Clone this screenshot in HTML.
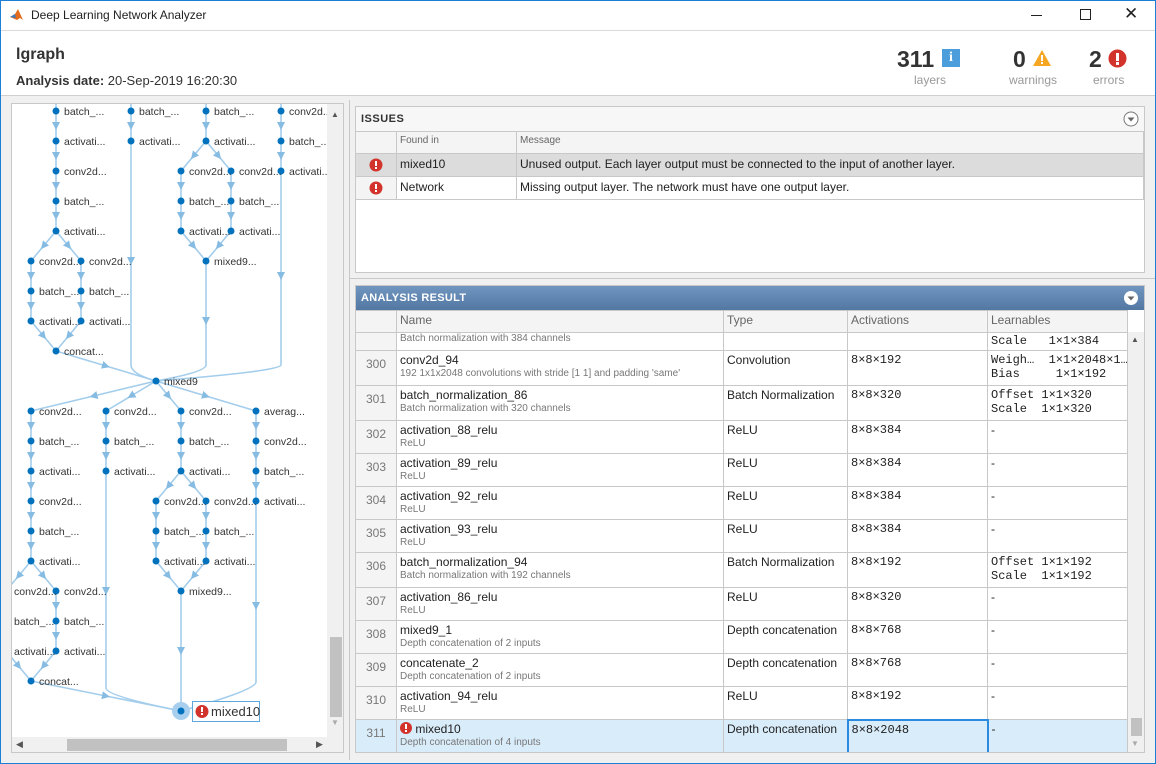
<!DOCTYPE html>
<html><head><meta charset="utf-8"><style>
*{box-sizing:border-box;margin:0;padding:0}
html,body{width:1156px;height:764px;overflow:hidden}
body{background:#f0f0f0;font-family:"Liberation Sans",Arial,sans-serif;position:relative;color:#222}
.abs{position:absolute}
.frame{position:absolute;left:0;top:0;width:1156px;height:764px;border:1px solid #1c7fd6;pointer-events:none}
.tb{left:0;top:0;width:1156px;height:30px;background:#fff}
.hdr{left:0;top:30px;width:1156px;height:66px;background:#fff;border-top:1px solid #dadada;border-bottom:1px solid #cfcfcf}
table{border-collapse:collapse;table-layout:fixed}
td{border:1px solid #c8c8c8;vertical-align:top;overflow:hidden;white-space:nowrap}
.hd td{background:#f4f4f4;color:#666;font-size:10px;padding:3px 3px 0;height:22px}
.sub{font-size:10px;color:#777;display:block;margin-top:1px}
.num{background:#f4f4f4;color:#777;font-size:10px;text-align:center;padding-top:6px!important}
.mono{font-family:"Liberation Mono",monospace;font-size:11px}
.rt td{font-size:12px;padding:2px 3px}
</style></head><body>
<div class="abs tb">
 <svg class="abs" style="left:9px;top:7px" width="16" height="16" viewBox="0 0 16 16"><path d="M1 10 L6 7 L9 2 L14 13 L11 11 L8 13 Z" fill="#e36a1c"/><path d="M1 10 L6 7 L7 11 Z" fill="#3a7bbf"/></svg>
 <div class="abs" style="left:31px;top:8px;font-size:12px">Deep Learning Network Analyzer</div>
 <div class="abs" style="left:1031px;top:15px;width:11px;height:1px;background:#222"></div>
 <div class="abs" style="left:1080px;top:9px;width:11px;height:11px;border:1px solid #222"></div>
 <div class="abs" style="left:1124px;top:4px;font-size:17px;color:#222">✕</div>
</div>
<div class="abs hdr">
 <div class="abs" style="left:16px;top:15px;font-size:16px;font-weight:bold;color:#333">lgraph</div>
 <div class="abs" style="left:16px;top:42px;font-size:13px;color:#333"><b>Analysis date:</b> 20-Sep-2019 16:20:30</div>
 <div class="abs" style="left:897px;top:15px;font-size:23px;font-weight:bold;color:#333">311</div>
 <div class="abs" style="left:942px;top:18px;width:18px;height:18px;background:#4b9edb;color:#fff;font:bold 14px 'Liberation Serif',serif;text-align:center;line-height:18px">i</div>
 <div class="abs" style="left:914px;top:42px;font-size:12px;color:#999">layers</div>
 <div class="abs" style="left:1013px;top:15px;font-size:23px;font-weight:bold;color:#333">0</div>
 <svg class="abs" style="left:1032px;top:18px" width="20" height="18"><path d="M10 1 L19 17 L1 17 Z" fill="#f5a623"/><rect x="9" y="6" width="2" height="6" fill="#fff"/><rect x="9" y="13" width="2" height="2" fill="#fff"/></svg>
 <div class="abs" style="left:1009px;top:42px;font-size:12px;color:#999">warnings</div>
 <div class="abs" style="left:1089px;top:15px;font-size:23px;font-weight:bold;color:#333">2</div>
 <svg class="abs" style="left:1108px;top:18px" width="19" height="19"><circle cx="9.5" cy="9.5" r="9" fill="#d2332a"/><rect x="8" y="4" width="3" height="8" fill="#fff"/><rect x="8" y="13" width="3" height="3" fill="#fff"/></svg>
 <div class="abs" style="left:1093px;top:42px;font-size:12px;color:#999">errors</div>
</div>
<div class="abs" style="left:349px;top:100px;width:1px;height:660px;background:#c8c8c8"></div>
<div class="abs" style="left:349px;top:278px;width:807px;height:1px;background:#c8c8c8"></div>

<!-- graph panel -->
<div class="abs" style="left:11px;top:103px;width:333px;height:650px;border:1px solid #c8c8c8;background:#fff;overflow:hidden">
<svg class="abs" style="left:-12px;top:-104px" width="340" height="750" font-family="Liberation Sans, Arial, sans-serif" font-size="10.5" fill="#333">
<defs><marker id="ar" markerWidth="8" markerHeight="8" refX="4" refY="4" orient="auto" markerUnits="userSpaceOnUse"><path d="M0 0 L8 4 L0 8 Z" fill="#86bbe2"/></marker></defs>
<g fill="none" stroke="#a3cdec" stroke-width="1.6" marker-mid="url(#ar)">
<polyline points="56,111 56,126 56,141"/><polyline points="56,141 56,156 56,171"/><polyline points="56,171 56,186 56,201"/><polyline points="56,201 56,216 56,231"/>
<polyline points="56,231 43.5,246 31,261"/><polyline points="56,231 68.5,246 81,261"/>
<polyline points="31,261 31,276 31,291"/><polyline points="31,291 31,306 31,321"/><polyline points="81,261 81,276 81,291"/><polyline points="81,291 81,306 81,321"/>
<polyline points="31,321 43.5,336 56,351"/><polyline points="81,321 68.5,336 56,351"/>
<polyline points="56,351 106,366 156,381"/>
<polyline points="131,111 131,126 131,141"/><polyline points="131,141 131,261 131,365"/>
<polyline points="206,111 206,126 206,141"/><polyline points="206,141 193.5,156 181,171"/><polyline points="206,141 218.5,156 231,171"/>
<polyline points="181,171 181,186 181,201"/><polyline points="181,201 181,216 181,231"/><polyline points="231,171 231,186 231,201"/><polyline points="231,201 231,216 231,231"/>
<polyline points="181,231 193.5,246 206,261"/><polyline points="231,231 218.5,246 206,261"/>
<polyline points="206,261 206,321 206,365"/>
<polyline points="281,111 281,126 281,141"/><polyline points="281,141 281,156 281,171"/><polyline points="281,171 281,276 281,365"/>
<polyline points="156,381 93.5,396 31,411"/><polyline points="156,381 131,396 106,411"/><polyline points="156,381 168.5,396 181,411"/><polyline points="156,381 206,396 256,411"/>
<polyline points="31,411 31,426 31,441"/><polyline points="31,441 31,456 31,471"/><polyline points="31,471 31,486 31,501"/><polyline points="31,501 31,516 31,531"/><polyline points="31,531 31,546 31,561"/>
<polyline points="31,561 18.5,576 6,591"/><polyline points="31,561 43.5,576 56,591"/>
<polyline points="56,591 56,606 56,621"/><polyline points="56,621 56,636 56,651"/><polyline points="6,591 6,606 6,621"/><polyline points="6,621 6,636 6,651"/>
<polyline points="56,651 43.5,666 31,681"/><polyline points="6,651 18.5,666 31,681"/>
<polyline points="31,681 106,696 181,711"/>
<polyline points="106,411 106,426 106,441"/><polyline points="106,441 106,456 106,471"/><polyline points="106,471 106,591 106,688"/>
<polyline points="181,411 181,426 181,441"/><polyline points="181,441 181,456 181,471"/>
<polyline points="181,471 168.5,486 156,501"/><polyline points="181,471 193.5,486 206,501"/>
<polyline points="156,501 156,516 156,531"/><polyline points="156,531 156,546 156,561"/><polyline points="206,501 206,516 206,531"/><polyline points="206,531 206,546 206,561"/>
<polyline points="156,561 168.5,576 181,591"/><polyline points="206,561 193.5,576 181,591"/>
<polyline points="181,591 181,651 181,711"/>
<polyline points="256,411 256,426 256,441"/><polyline points="256,441 256,456 256,471"/><polyline points="256,471 256,486 256,501"/><polyline points="256,501 256,606 256,682"/>
</g>
<g fill="none" stroke="#a3cdec" stroke-width="1.6">
<path d="M56 100 V111 M131 100 V111 M206 100 V111 M281 100 V111"/>
<path d="M131 365 Q131 374 156 381"/><path d="M206 365 Q206 372 156 381"/><path d="M281 365 Q281 371 156 381"/>
<path d="M106 688 Q106 696 181 711"/><path d="M256 682 Q256 690 181 711"/>
</g>
<circle cx="181" cy="711" r="9" fill="#a8d0ee"/>
<g fill="#0072bd">
<circle cx="56" cy="111" r="3.5"/><circle cx="56" cy="141" r="3.5"/><circle cx="56" cy="171" r="3.5"/><circle cx="56" cy="201" r="3.5"/><circle cx="56" cy="231" r="3.5"/>
<circle cx="31" cy="261" r="3.5"/><circle cx="81" cy="261" r="3.5"/><circle cx="31" cy="291" r="3.5"/><circle cx="81" cy="291" r="3.5"/><circle cx="31" cy="321" r="3.5"/><circle cx="81" cy="321" r="3.5"/><circle cx="56" cy="351" r="3.5"/>
<circle cx="131" cy="111" r="3.5"/><circle cx="131" cy="141" r="3.5"/>
<circle cx="206" cy="111" r="3.5"/><circle cx="206" cy="141" r="3.5"/><circle cx="181" cy="171" r="3.5"/><circle cx="231" cy="171" r="3.5"/><circle cx="181" cy="201" r="3.5"/><circle cx="231" cy="201" r="3.5"/><circle cx="181" cy="231" r="3.5"/><circle cx="231" cy="231" r="3.5"/><circle cx="206" cy="261" r="3.5"/>
<circle cx="281" cy="111" r="3.5"/><circle cx="281" cy="141" r="3.5"/><circle cx="281" cy="171" r="3.5"/>
<circle cx="156" cy="381" r="3.5"/>
<circle cx="31" cy="411" r="3.5"/><circle cx="31" cy="441" r="3.5"/><circle cx="31" cy="471" r="3.5"/><circle cx="31" cy="501" r="3.5"/><circle cx="31" cy="531" r="3.5"/><circle cx="31" cy="561" r="3.5"/>
<circle cx="56" cy="591" r="3.5"/><circle cx="56" cy="621" r="3.5"/><circle cx="56" cy="651" r="3.5"/><circle cx="31" cy="681" r="3.5"/>
<circle cx="106" cy="411" r="3.5"/><circle cx="106" cy="441" r="3.5"/><circle cx="106" cy="471" r="3.5"/>
<circle cx="181" cy="411" r="3.5"/><circle cx="181" cy="441" r="3.5"/><circle cx="181" cy="471" r="3.5"/><circle cx="156" cy="501" r="3.5"/><circle cx="206" cy="501" r="3.5"/><circle cx="156" cy="531" r="3.5"/><circle cx="206" cy="531" r="3.5"/><circle cx="156" cy="561" r="3.5"/><circle cx="206" cy="561" r="3.5"/><circle cx="181" cy="591" r="3.5"/>
<circle cx="256" cy="411" r="3.5"/><circle cx="256" cy="441" r="3.5"/><circle cx="256" cy="471" r="3.5"/><circle cx="256" cy="501" r="3.5"/>
<circle cx="181" cy="711" r="3.5"/>
</g>
<g>
<text x="64" y="115">batch_...</text><text x="64" y="145">activati...</text><text x="64" y="175">conv2d...</text><text x="64" y="205">batch_...</text><text x="64" y="235">activati...</text>
<text x="39" y="265">conv2d...</text><text x="89" y="265">conv2d...</text><text x="39" y="295">batch_...</text><text x="89" y="295">batch_...</text><text x="39" y="325">activati...</text><text x="89" y="325">activati...</text><text x="64" y="355">concat...</text>
<text x="139" y="115">batch_...</text><text x="139" y="145">activati...</text>
<text x="214" y="115">batch_...</text><text x="214" y="145">activati...</text><text x="189" y="175">conv2d...</text><text x="239" y="175">conv2d...</text><text x="189" y="205">batch_...</text><text x="239" y="205">batch_...</text><text x="189" y="235">activati...</text><text x="239" y="235">activati...</text><text x="214" y="265">mixed9...</text>
<text x="289" y="115">conv2d...</text><text x="289" y="145">batch_...</text><text x="289" y="175">activati...</text>
<text x="164" y="385">mixed9</text>
<text x="39" y="415">conv2d...</text><text x="39" y="445">batch_...</text><text x="39" y="475">activati...</text><text x="39" y="505">conv2d...</text><text x="39" y="535">batch_...</text><text x="39" y="565">activati...</text>
<text x="14" y="595">conv2d...</text><text x="64" y="595">conv2d...</text><text x="14" y="625">batch_...</text><text x="64" y="625">batch_...</text><text x="14" y="655">activati...</text><text x="64" y="655">activati...</text><text x="39" y="685">concat...</text>
<text x="114" y="415">conv2d...</text><text x="114" y="445">batch_...</text><text x="114" y="475">activati...</text>
<text x="189" y="415">conv2d...</text><text x="189" y="445">batch_...</text><text x="189" y="475">activati...</text><text x="164" y="505">conv2d...</text><text x="214" y="505">conv2d...</text><text x="164" y="535">batch_...</text><text x="214" y="535">batch_...</text><text x="164" y="565">activati...</text><text x="214" y="565">activati...</text><text x="189" y="595">mixed9...</text>
<text x="264" y="415">averag...</text><text x="264" y="445">conv2d...</text><text x="264" y="475">batch_...</text><text x="264" y="505">activati...</text>
</g>
<rect x="192.5" y="701.5" width="67" height="20" fill="#fff" stroke="#5ea7dc"/>
<circle cx="202" cy="711.5" r="6.5" fill="#d2332a"/><rect x="201" y="707" width="2" height="5" fill="#fff"/><rect x="201" y="713" width="2" height="2" fill="#fff"/>
<text x="211" y="716" font-size="13" fill="#333">mixed10</text>
</svg>
<div class="abs" style="left:315px;top:0;width:17px;height:634px;background:#f0f0f0"></div>
<div class="abs" style="left:318px;top:533px;width:12px;height:80px;background:#c1c1c1"></div>
<div class="abs" style="left:319px;top:6px;font-size:8px;color:#555">▲</div>
<div class="abs" style="left:319px;top:614px;font-size:8px;color:#aaa">▼</div>
<div class="abs" style="left:0;top:633px;width:332px;height:16px;background:#f0f0f0"></div>
<div class="abs" style="left:55px;top:635px;width:220px;height:12px;background:#c1c1c1"></div>
<div class="abs" style="left:4px;top:635px;font-size:9px;color:#555">◀</div>
<div class="abs" style="left:304px;top:635px;font-size:9px;color:#555">▶</div>
</div>

<!-- issues -->
<div class="abs" style="left:355px;top:106px;width:790px;height:167px;border:1px solid #c8c8c8;background:#fff;overflow:hidden">
 <div style="height:24px;background:#f7f7f7;font-size:11px;font-weight:bold;color:#333;padding:6px 5px;letter-spacing:.5px">ISSUES</div>
 <svg class="abs" style="right:5px;top:4px" width="16" height="16"><circle cx="8" cy="8" r="7" fill="#fff" stroke="#777"/><path d="M4.5 6.5 L11.5 6.5 L8 10.5 Z" fill="#666"/></svg>
 <table style="width:789px;margin-left:-1px">
  <colgroup><col style="width:41px"><col style="width:120px"><col></colgroup>
  <tr class="hd"><td></td><td>Found in</td><td>Message</td></tr>
  <tr style="height:23px;background:#dcdcdc;font-size:12px"><td style="text-align:center;padding-top:4px"><svg width="14" height="14"><circle cx="7" cy="7" r="6.5" fill="#d2332a"/><rect x="6" y="3" width="2" height="5" fill="#fff"/><rect x="6" y="9" width="2" height="2" fill="#fff"/></svg></td><td style="padding:3px 3px">mixed10</td><td style="padding:3px 3px">Unused output. Each layer output must be connected to the input of another layer.</td></tr>
  <tr style="height:23px;background:#fff;font-size:12px"><td style="text-align:center;padding-top:4px;background:#f4f4f4"><svg width="14" height="14"><circle cx="7" cy="7" r="6.5" fill="#d2332a"/><rect x="6" y="3" width="2" height="5" fill="#fff"/><rect x="6" y="9" width="2" height="2" fill="#fff"/></svg></td><td style="padding:3px 3px">Network</td><td style="padding:3px 3px">Missing output layer. The network must have one output layer.</td></tr>
 </table>
</div>

<!-- analysis result -->
<div class="abs" style="left:355px;top:285px;width:790px;height:468px;border:1px solid #c8c8c8;background:#fff;overflow:hidden">
 <div style="height:24px;background:linear-gradient(#7096c0,#5277a2);font-size:11px;font-weight:bold;color:#fff;padding:6px 5px;letter-spacing:.3px">ANALYSIS RESULT</div>
 <svg class="abs" style="right:5px;top:4px" width="16" height="16"><circle cx="8" cy="8" r="7" fill="#fff"/><path d="M4.5 6.5 L11.5 6.5 L8 10.5 Z" fill="#666"/></svg>
 <table class="rt" style="width:773px;margin-left:-1px">
  <colgroup><col style="width:41px"><col style="width:327px"><col style="width:124px"><col style="width:140px"><col></colgroup>
  <tr class="hd"><td></td><td>Name</td><td>Type</td><td>Activations</td><td>Learnables</td></tr>
  <tr style="height:18px"><td class="num" style="padding-top:0!important"></td><td style="padding:0 3px"><span class="sub" style="margin:0">Batch normalization with 384 channels</span></td><td></td><td></td><td class="mono" style="padding:1px 3px">Scale &nbsp;&nbsp;1×1×384</td></tr>
  <tr style="height:35px"><td class="num">300</td><td>conv2d_94<span class="sub">192 1x1x2048 convolutions with stride [1 1] and padding 'same'</span></td><td>Convolution</td><td class="mono">8×8×192</td><td class="mono">Weigh… &nbsp;1×1×2048×1…<br>Bias &nbsp;&nbsp;&nbsp;&nbsp;1×1×192</td></tr>
  <tr style="height:35px"><td class="num">301</td><td>batch_normalization_86<span class="sub">Batch normalization with 320 channels</span></td><td>Batch Normalization</td><td class="mono">8×8×320</td><td class="mono">Offset 1×1×320<br>Scale &nbsp;1×1×320</td></tr>
  <tr style="height:33px"><td class="num">302</td><td>activation_88_relu<span class="sub">ReLU</span></td><td>ReLU</td><td class="mono">8×8×384</td><td>-</td></tr>
  <tr style="height:33px"><td class="num">303</td><td>activation_89_relu<span class="sub">ReLU</span></td><td>ReLU</td><td class="mono">8×8×384</td><td>-</td></tr>
  <tr style="height:33px"><td class="num">304</td><td>activation_92_relu<span class="sub">ReLU</span></td><td>ReLU</td><td class="mono">8×8×384</td><td>-</td></tr>
  <tr style="height:33px"><td class="num">305</td><td>activation_93_relu<span class="sub">ReLU</span></td><td>ReLU</td><td class="mono">8×8×384</td><td>-</td></tr>
  <tr style="height:35px"><td class="num">306</td><td>batch_normalization_94<span class="sub">Batch normalization with 192 channels</span></td><td>Batch Normalization</td><td class="mono">8×8×192</td><td class="mono">Offset 1×1×192<br>Scale &nbsp;1×1×192</td></tr>
  <tr style="height:33px"><td class="num">307</td><td>activation_86_relu<span class="sub">ReLU</span></td><td>ReLU</td><td class="mono">8×8×320</td><td>-</td></tr>
  <tr style="height:33px"><td class="num">308</td><td>mixed9_1<span class="sub">Depth concatenation of 2 inputs</span></td><td>Depth concatenation</td><td class="mono">8×8×768</td><td>-</td></tr>
  <tr style="height:33px"><td class="num">309</td><td>concatenate_2<span class="sub">Depth concatenation of 2 inputs</span></td><td>Depth concatenation</td><td class="mono">8×8×768</td><td>-</td></tr>
  <tr style="height:33px"><td class="num">310</td><td>activation_94_relu<span class="sub">ReLU</span></td><td>ReLU</td><td class="mono">8×8×192</td><td>-</td></tr>
  <tr style="height:34px;background:#d9ecfa"><td class="num" style="background:#d9ecfa">311</td><td><svg width="12" height="12" style="vertical-align:-1px"><circle cx="6" cy="6" r="6" fill="#d2332a"/><rect x="5" y="2" width="2" height="5" fill="#fff"/><rect x="5" y="8" width="2" height="2" fill="#fff"/></svg> mixed10<span class="sub">Depth concatenation of 4 inputs</span></td><td>Depth concatenation</td><td class="mono" style="border:2px solid #2a8ae0">8×8×2048</td><td>-</td></tr>
 </table>
 <div class="abs" style="left:772px;top:46px;width:17px;height:421px;background:#f0f0f0"></div>
 <div class="abs" style="left:775px;top:432px;width:11px;height:18px;background:#c1c1c1"></div>
 <div class="abs" style="left:775px;top:49px;font-size:8px;color:#555">▲</div>
 <div class="abs" style="left:775px;top:453px;font-size:8px;color:#aaa">▼</div>
</div>
<div class="frame"></div>
</body></html>
